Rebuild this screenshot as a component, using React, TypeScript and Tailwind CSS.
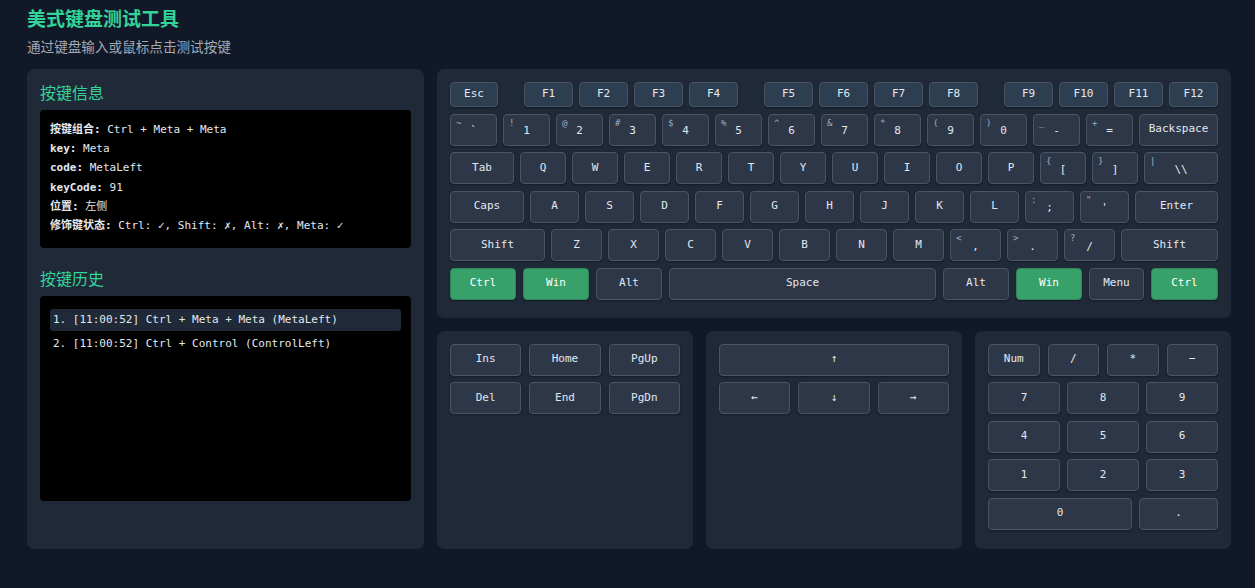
import React from 'react';

const mono = "font-['DejaVu_Sans_Mono','Noto_Sans_CJK_SC',monospace]";

type K = { label: string; shift?: string; w?: string; active?: boolean; fn?: boolean };

function Key({ label, shift, w = 'flex-1', active, fn }: K) {
  const tone = active
    ? 'bg-[#38a169] border-[#2f855a] text-white'
    : fn
      ? 'bg-[#2c3e50] border-[#4a5568] text-[#e2e8f0]'
      : 'bg-[#2d3748] border-[#4a5568] text-[#e2e8f0]';
  return (
    <div
      className={`${w} relative flex items-center justify-center rounded-[4px] border shadow-[0_1px_2px_rgba(0,0,0,0.35)] text-[11px] ${tone}`}
    >
      {shift && <span className="absolute left-[5px] top-[2px] text-[9px] leading-[12px] text-[#a0aec0]">{shift}</span>}
      <span className={shift ? 'mt-[4px]' : ''}>{label}</span>
    </div>
  );
}

const numRow: [string, string][] = [
  ['`', '~'], ['1', '!'], ['2', '@'], ['3', '#'], ['4', '$'], ['5', '%'], ['6', '^'],
  ['7', '&'], ['8', '*'], ['9', '('], ['0', ')'], ['-', '_'], ['=', '+'],
];

const qRow: [string, string?][] = [
  ['Q'], ['W'], ['E'], ['R'], ['T'], ['Y'], ['U'], ['I'], ['O'], ['P'], ['[', '{'], [']', '}'],
];

const aRow: [string, string?][] = [
  ['A'], ['S'], ['D'], ['F'], ['G'], ['H'], ['J'], ['K'], ['L'], [';', ':'], ["'", '"'],
];

const zRow: [string, string?][] = [
  ['Z'], ['X'], ['C'], ['V'], ['B'], ['N'], ['M'], [',', '<'], ['.', '>'], ['/', '?'],
];

const history = [
  '1. [11:00:52] Ctrl + Meta + Meta (MetaLeft)',
  '2. [11:00:52] Ctrl + Control (ControlLeft)',
];

export default function App() {
  return (
    <div className={`min-h-screen bg-[#111827] px-[27px] pt-[6px] pb-[39px] ${mono}`}>
      <h1 className="font-['Noto_Sans_CJK_SC',sans-serif] text-[19px] leading-[24px] font-bold text-[#34d399]">
        美式键盘测试工具
      </h1>
      <p className="mt-[6px] font-['Noto_Sans_CJK_SC',sans-serif] text-[13.6px] leading-[20px] text-[#a3aab5]">
        通过键盘输入或鼠标点击测试按键
      </p>

      <div className="mt-[13px] flex gap-[13px]">
        {/* left: info + history */}
        <div className="w-[397px] shrink-0 rounded-[7px] bg-[#1f2937] p-[13px]">
          <h2 className="font-['Noto_Sans_CJK_SC',sans-serif] text-[16px] leading-[20px] text-[#34d399]">按键信息</h2>
          <div className="mt-[8px] h-[138px] rounded-[4px] bg-black px-[10px] pt-[10px] text-[11px] leading-[19.2px] text-[#e2e8f0]">
            <div><b>按键组合:</b> Ctrl + Meta + Meta</div>
            <div><b>key:</b> Meta</div>
            <div><b>code:</b> MetaLeft</div>
            <div><b>keyCode:</b> 91</div>
            <div><b>位置:</b> 左侧</div>
            <div><b>修饰键状态:</b> Ctrl: ✓, Shift: ✗, Alt: ✗, Meta: ✓</div>
          </div>

          <h2 className="mt-[20px] font-['Noto_Sans_CJK_SC',sans-serif] text-[16px] leading-[20px] text-[#34d399]">按键历史</h2>
          <div className="mt-[8px] flex h-[205px] flex-col gap-[2px] rounded-[4px] bg-black px-[10px] pt-[13px] text-[11px] text-[#e2e8f0]">
            {history.map((h, i) => (
              <div
                key={h}
                className={`flex h-[22px] items-center rounded-[3px] px-[3px] ${i === 0 ? 'bg-[#1f2937]' : ''}`}
              >
                {h}
              </div>
            ))}
          </div>
        </div>

        {/* right: keyboard */}
        <div className="flex flex-1 flex-col gap-[13px]">
          <div className="flex flex-col gap-[6.5px] rounded-[7px] bg-[#1f2937] px-[13px] pt-[13px] pb-[18px]">
            <div className="flex h-[25px] gap-[6px]">
              <Key label="Esc" w="w-[48px]" fn />
              <div className="w-[14px]" />
              {['F1', 'F2', 'F3', 'F4'].map((f) => <Key key={f} label={f} w="w-[49px]" fn />)}
              <div className="w-[14px]" />
              {['F5', 'F6', 'F7', 'F8'].map((f) => <Key key={f} label={f} w="w-[49px]" fn />)}
              <div className="w-[14px]" />
              {['F9', 'F10', 'F11', 'F12'].map((f) => <Key key={f} label={f} w="w-[49px]" fn />)}
            </div>
            <div className="flex h-[32px] gap-[6px]">
              {numRow.map(([l, s]) => <Key key={l} label={l} shift={s} w="w-[47px]" />)}
              <Key label="Backspace" />
            </div>
            <div className="flex h-[32px] gap-[6px]">
              <Key label="Tab" w="w-[64px]" />
              {qRow.map(([l, s]) => <Key key={l} label={l} shift={s} w="w-[46px]" />)}
              <Key label="\\" shift="|" />
            </div>
            <div className="flex h-[32px] gap-[6px]">
              <Key label="Caps" w="w-[74px]" />
              {aRow.map(([l, s]) => <Key key={l} label={l} shift={s} w="w-[49px]" />)}
              <Key label="Enter" />
            </div>
            <div className="flex h-[32px] gap-[6px]">
              <Key label="Shift" w="w-[95px]" />
              {zRow.map(([l, s]) => <Key key={l} label={l} shift={s} w="w-[51px]" />)}
              <Key label="Shift" />
            </div>
            <div className="flex h-[32px] gap-[7px]">
              <Key label="Ctrl" w="w-[66px]" active />
              <Key label="Win" w="w-[66px]" active />
              <Key label="Alt" w="w-[66px]" />
              <Key label="Space" />
              <Key label="Alt" w="w-[66px]" />
              <Key label="Win" w="w-[66px]" active />
              <Key label="Menu" w="w-[55px]" />
              <Key label="Ctrl" w="w-[67px]" active />
            </div>
          </div>

          <div className="grid h-[218px] grid-cols-3 gap-[13px]">
            {/* nav cluster */}
            <div className="rounded-[7px] bg-[#1f2937] p-[13px]">
              <div className="grid grid-cols-3 gap-x-[8px] gap-y-[6.5px]">
                {['Ins', 'Home', 'PgUp', 'Del', 'End', 'PgDn'].map((k) => (
                  <div key={k} className="flex h-[32px]"><Key label={k} /></div>
                ))}
              </div>
            </div>

            {/* arrows */}
            <div className="rounded-[7px] bg-[#1f2937] p-[13px]">
              <div className="flex flex-col gap-[6.5px]">
                <div className="flex h-[32px]"><Key label="↑" /></div>
                <div className="flex h-[32px] gap-[8px]">
                  <Key label="←" />
                  <Key label="↓" />
                  <Key label="→" />
                </div>
              </div>
            </div>

            {/* numpad */}
            <div className="rounded-[7px] bg-[#1f2937] p-[13px]">
              <div className="flex flex-col gap-[6.5px]">
                <div className="flex h-[32px] gap-[8px]">
                  <Key label="Num" />
                  <Key label="/" />
                  <Key label="*" />
                  <Key label="−" />
                </div>
                {[['7', '8', '9'], ['4', '5', '6'], ['1', '2', '3']].map((row) => (
                  <div key={row[0]} className="flex h-[32px] gap-[7px]">
                    {row.map((k) => <Key key={k} label={k} />)}
                  </div>
                ))}
                <div className="flex h-[32px] gap-[7px]">
                  <Key label="0" w="w-[144px]" />
                  <Key label="." />
                </div>
              </div>
            </div>
          </div>
        </div>
      </div>
    </div>
  );
}
